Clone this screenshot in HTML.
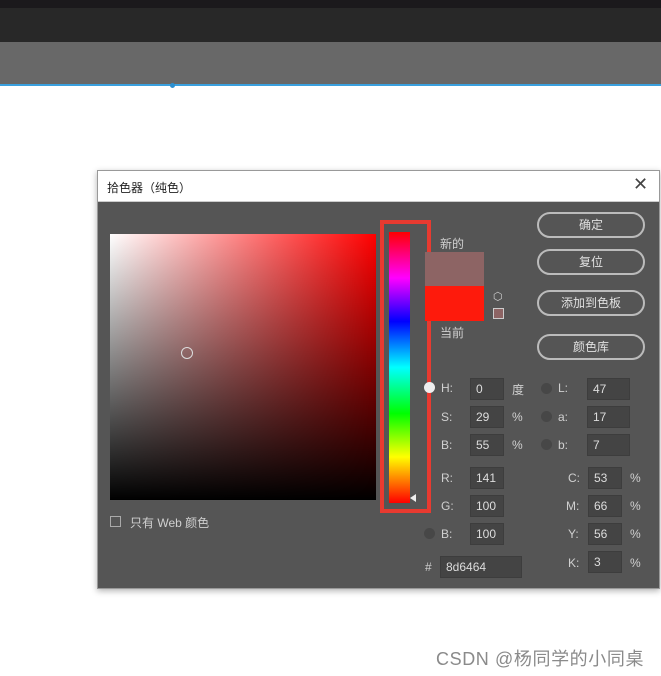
<!DOCTYPE html>
<html><head><meta charset="utf-8"><style>
body{margin:0;width:661px;height:676px;background:#fff;position:relative;overflow:hidden;font-family:"Liberation Sans","Noto Sans CJK SC",sans-serif}
div{position:absolute;box-sizing:border-box}
.t{color:#d0d0d0;font-size:12px}
.in{background:#444;border:1px solid #3d3d3d;color:#ddd;font-size:12px;padding:3px 0 0 5px;height:22px}
.btn{border:2px solid #bbb;border-radius:13px;color:#e0e0e0;font-size:12px;text-align:center;line-height:22px;left:537px;width:108px;height:26px}
.rd{width:11px;height:11px;border-radius:50%;background:#474747}
</style></head><body>
<div style="left:0;top:0;width:661px;height:8px;background:#1b191c"></div>
<div style="left:0;top:8px;width:661px;height:34px;background:#282828"></div>
<div style="left:0;top:42px;width:661px;height:42px;background:#686868"></div>
<div style="left:0;top:84px;width:661px;height:2px;background:#3aa0de"></div>
<div style="left:170px;top:83px;width:5px;height:5px;border-radius:50%;background:#2b8fd0"></div>

<div style="left:97px;top:170px;width:563px;height:419px;background:#555;border:1px solid #999;box-shadow:0 2px 6px rgba(0,0,0,.3)"></div>
<div style="left:98px;top:171px;width:561px;height:31px;background:#fff;border-bottom:1px solid #ccc;font-size:12px;color:#222;padding:8px 0 0 9px">拾色器（纯色）</div>
<div style="left:633px;top:174px;font-size:18px;color:#444">✕</div>

<div style="left:110px;top:234px;width:266px;height:266px;background:linear-gradient(to bottom,rgba(0,0,0,0),#000),linear-gradient(to right,#fff,#f00)"></div>
<div style="left:181px;top:347px;width:12px;height:12px;border-radius:50%;border:1px solid #ddd"></div>

<div style="left:380px;top:220px;width:51px;height:293px;border:4px solid #e83a30"></div>
<div style="left:389px;top:232px;width:21px;height:271px;background:linear-gradient(to bottom,#f00,#f0f 17%,#00f 33%,#0ff 50%,#0f0 67%,#ff0 83%,#f00)"></div>
<div style="left:410px;top:494px;width:0;height:0;border-top:4px solid transparent;border-bottom:4px solid transparent;border-right:6px solid #eee"></div>

<div class="t" style="left:440px;top:235px">新的</div>
<div style="left:425px;top:252px;width:59px;height:34px;background:#8d6464"></div>
<div style="left:425px;top:286px;width:59px;height:35px;background:#fe1a0c"></div>
<div style="left:493px;top:308px;width:11px;height:11px;background:#8d6464;border:1px solid #ccc"></div>
<div class="t" style="left:493px;top:290px;font-size:11px">⬡</div>
<div class="t" style="left:440px;top:324px">当前</div>

<div class="btn" style="top:212px">确定</div>
<div class="btn" style="top:249px">复位</div>
<div class="btn" style="top:290px">添加到色板</div>
<div class="btn" style="top:334px">颜色库</div>

<div style="left:424px;top:382px;width:11px;height:11px;border-radius:50%;background:#eee"></div>
<div class="t" style="left:441px;top:381px">H:</div><div class="in" style="left:470px;top:378px;width:34px">0</div><div class="t" style="left:512px;top:381px">度</div>
<div class="t" style="left:441px;top:410px">S:</div><div class="in" style="left:470px;top:406px;width:34px">29</div><div class="t" style="left:512px;top:410px">%</div>
<div class="t" style="left:441px;top:438px">B:</div><div class="in" style="left:470px;top:434px;width:34px">55</div><div class="t" style="left:512px;top:438px">%</div>
<div class="rd" style="left:541px;top:383px"></div><div class="t" style="left:558px;top:381px">L:</div><div class="in" style="left:587px;top:378px;width:43px">47</div>
<div class="rd" style="left:541px;top:411px"></div><div class="t" style="left:558px;top:410px">a:</div><div class="in" style="left:587px;top:406px;width:43px">17</div>
<div class="rd" style="left:541px;top:439px"></div><div class="t" style="left:558px;top:438px">b:</div><div class="in" style="left:587px;top:434px;width:43px">7</div>

<div class="t" style="left:441px;top:471px">R:</div><div class="in" style="left:470px;top:467px;width:34px">141</div>
<div class="t" style="left:441px;top:499px">G:</div><div class="in" style="left:470px;top:495px;width:34px">100</div>
<div class="rd" style="left:424px;top:528px"></div><div class="t" style="left:441px;top:527px">B:</div><div class="in" style="left:470px;top:523px;width:34px">100</div>
<div class="t" style="left:425px;top:560px">#</div><div class="in" style="left:440px;top:556px;width:82px">8d6464</div>

<div class="t" style="left:568px;top:471px">C:</div><div class="in" style="left:588px;top:467px;width:34px">53</div><div class="t" style="left:630px;top:471px">%</div>
<div class="t" style="left:566px;top:499px">M:</div><div class="in" style="left:588px;top:495px;width:34px">66</div><div class="t" style="left:630px;top:499px">%</div>
<div class="t" style="left:568px;top:527px">Y:</div><div class="in" style="left:588px;top:523px;width:34px">56</div><div class="t" style="left:630px;top:527px">%</div>
<div class="t" style="left:568px;top:556px">K:</div><div class="in" style="left:588px;top:551px;width:34px">3</div><div class="t" style="left:630px;top:556px">%</div>

<div style="left:110px;top:516px;width:11px;height:11px;border:1px solid #aaa"></div>
<div class="t" style="left:130px;top:514px">只有 Web 颜色</div>

<div style="left:436px;top:645px;font-size:18px;letter-spacing:0.6px;color:#8a8a8a;white-space:nowrap">CSDN @杨同学的小同桌</div>
</body></html>
